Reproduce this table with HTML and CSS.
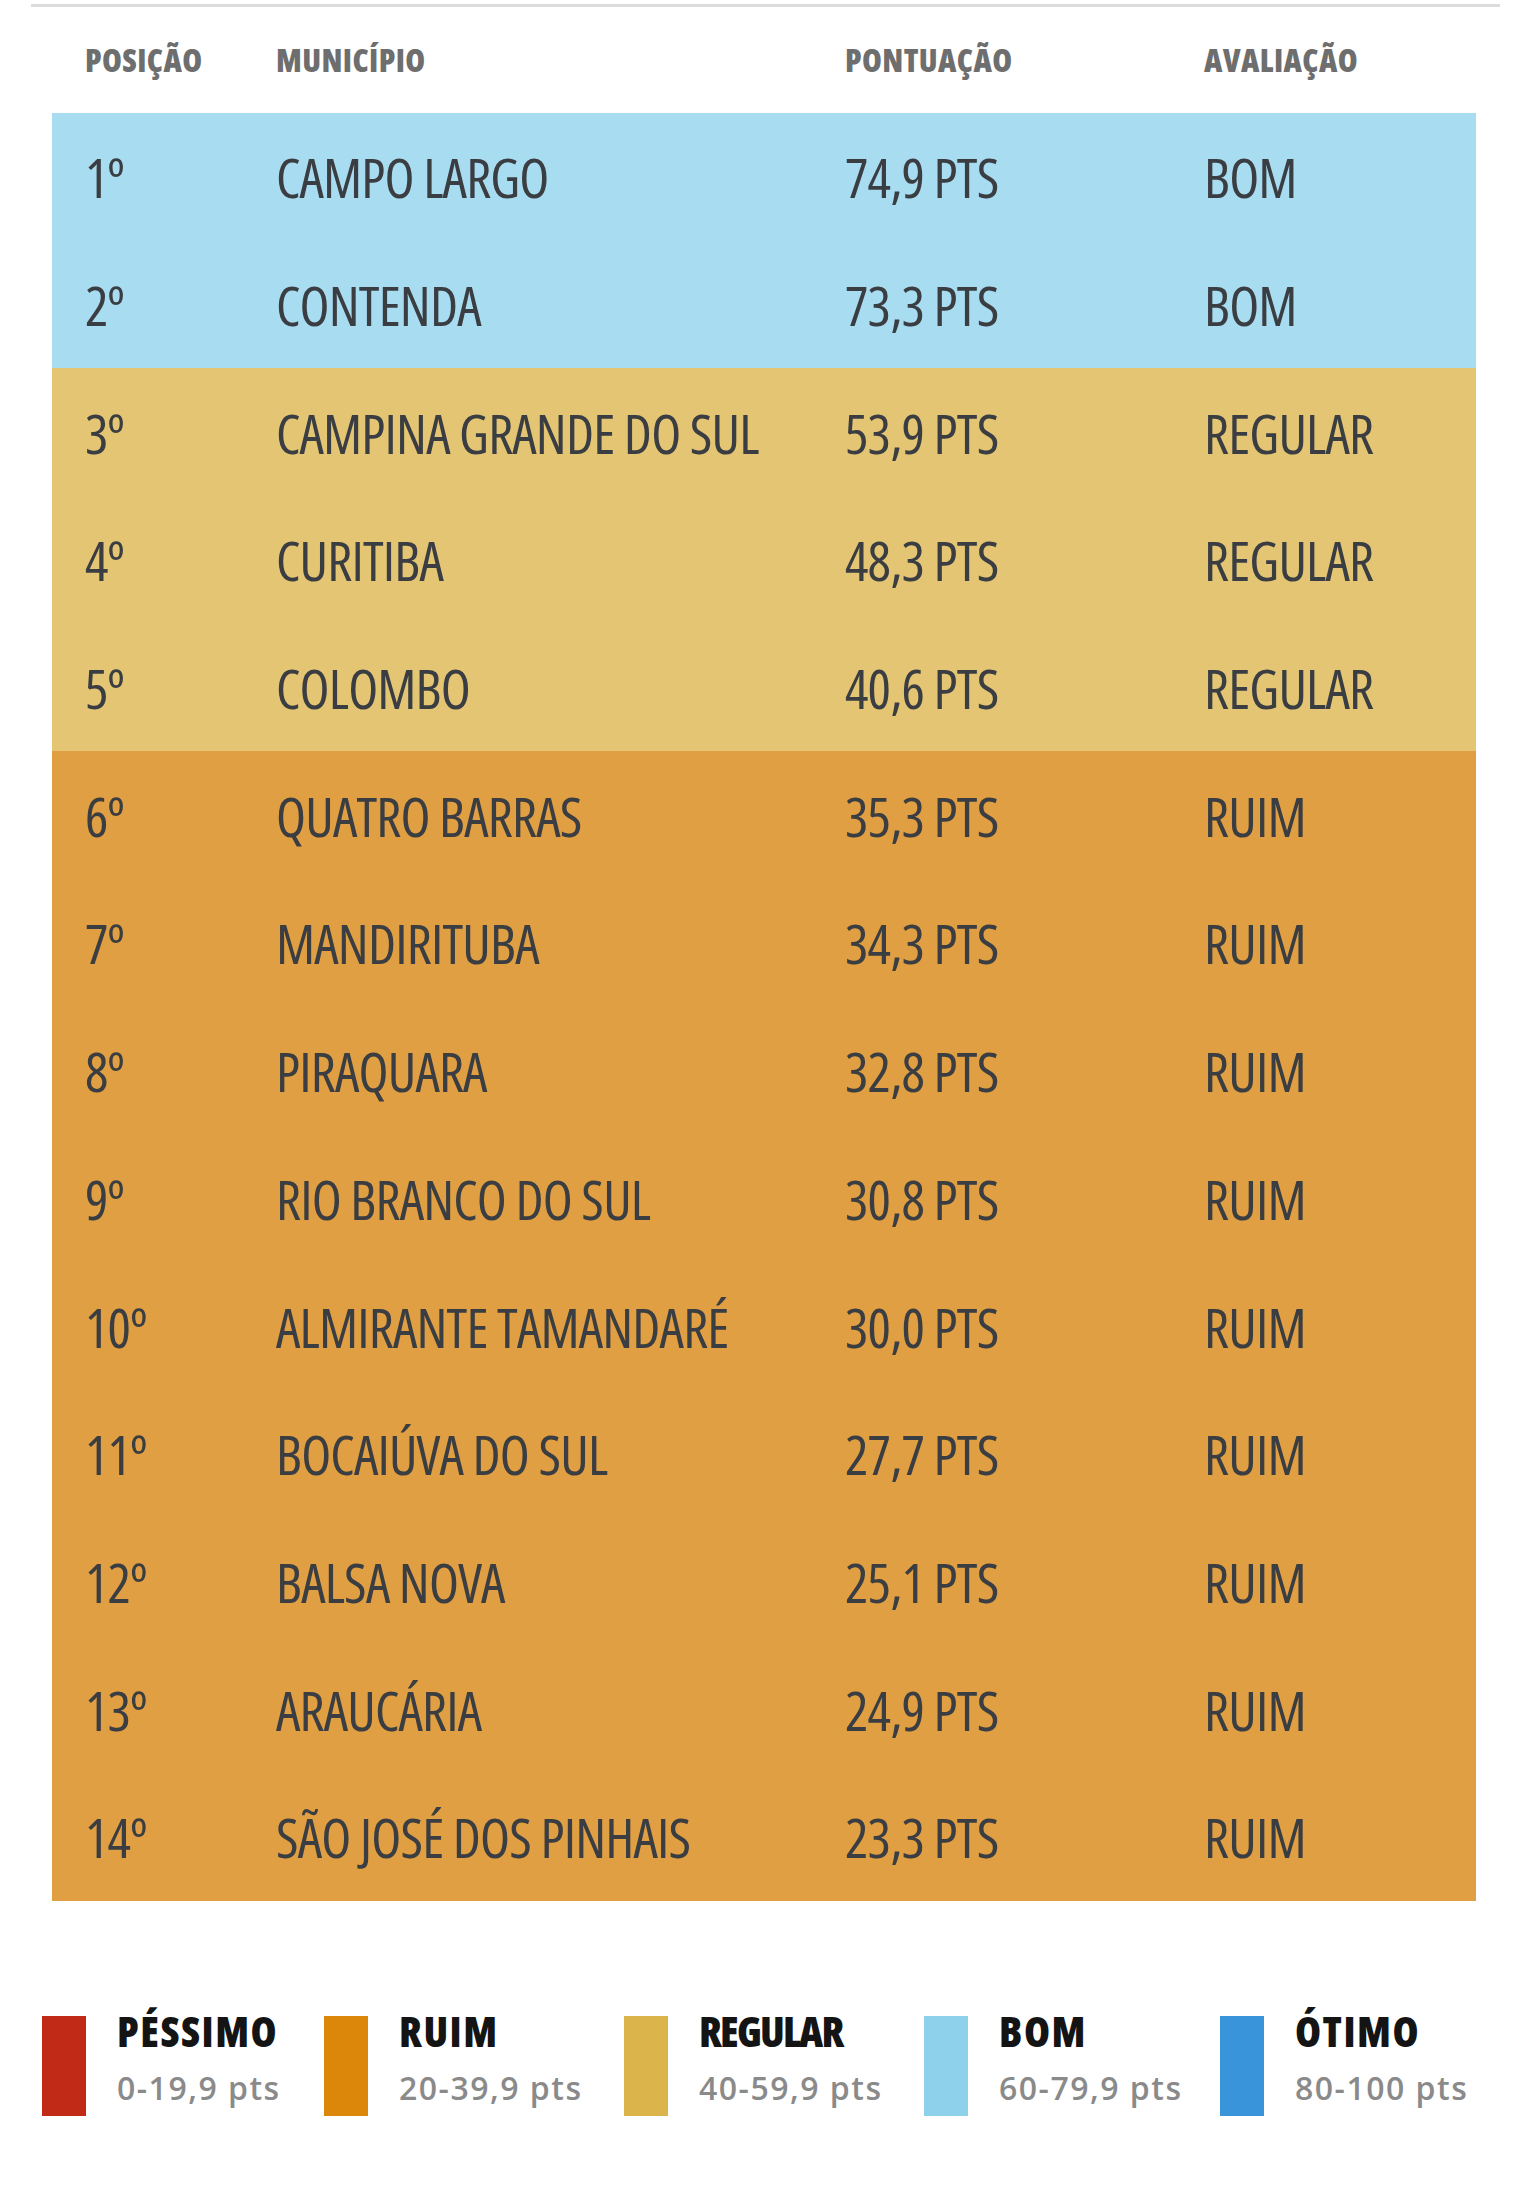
FILE: index.html
```html
<!DOCTYPE html>
<html lang="pt-BR">
<head>
<meta charset="utf-8">
<title>Ranking de municípios</title>
<link rel="stylesheet" href="styles.css">
</head>
<body>
<div class="page">
  <div class="topline"></div>
  <div class="ranking">
    <div class="row head">
      <div class="cell">POSIÇÃO</div>
      <div class="cell">MUNICÍPIO</div>
      <div class="cell">PONTUAÇÃO</div>
      <div class="cell">AVALIAÇÃO</div>
    </div>
    <div class="row bom"><div class="cell">1º</div><div class="cell">CAMPO LARGO</div><div class="cell">74,9 PTS</div><div class="cell">BOM</div></div>
    <div class="row bom"><div class="cell">2º</div><div class="cell">CONTENDA</div><div class="cell">73,3 PTS</div><div class="cell">BOM</div></div>
    <div class="row regular"><div class="cell">3º</div><div class="cell">CAMPINA GRANDE DO SUL</div><div class="cell">53,9 PTS</div><div class="cell">REGULAR</div></div>
    <div class="row regular"><div class="cell">4º</div><div class="cell">CURITIBA</div><div class="cell">48,3 PTS</div><div class="cell">REGULAR</div></div>
    <div class="row regular"><div class="cell">5º</div><div class="cell">COLOMBO</div><div class="cell">40,6 PTS</div><div class="cell">REGULAR</div></div>
    <div class="row ruim"><div class="cell">6º</div><div class="cell">QUATRO BARRAS</div><div class="cell">35,3 PTS</div><div class="cell">RUIM</div></div>
    <div class="row ruim"><div class="cell">7º</div><div class="cell">MANDIRITUBA</div><div class="cell">34,3 PTS</div><div class="cell">RUIM</div></div>
    <div class="row ruim"><div class="cell">8º</div><div class="cell">PIRAQUARA</div><div class="cell">32,8 PTS</div><div class="cell">RUIM</div></div>
    <div class="row ruim"><div class="cell">9º</div><div class="cell">RIO BRANCO DO SUL</div><div class="cell">30,8 PTS</div><div class="cell">RUIM</div></div>
    <div class="row ruim"><div class="cell">10º</div><div class="cell">ALMIRANTE TAMANDARÉ</div><div class="cell">30,0 PTS</div><div class="cell">RUIM</div></div>
    <div class="row ruim"><div class="cell">11º</div><div class="cell">BOCAIÚVA DO SUL</div><div class="cell">27,7 PTS</div><div class="cell">RUIM</div></div>
    <div class="row ruim"><div class="cell">12º</div><div class="cell">BALSA NOVA</div><div class="cell">25,1 PTS</div><div class="cell">RUIM</div></div>
    <div class="row ruim"><div class="cell">13º</div><div class="cell">ARAUCÁRIA</div><div class="cell">24,9 PTS</div><div class="cell">RUIM</div></div>
    <div class="row ruim"><div class="cell">14º</div><div class="cell">SÃO JOSÉ DOS PINHAIS</div><div class="cell">23,3 PTS</div><div class="cell">RUIM</div></div>
  </div>

  <div class="legend">
    <div class="item"><span class="swatch sw-pessimo"></span><div class="label"><div class="name">PÉSSIMO</div><div class="range">0-19,9 pts</div></div></div>
    <div class="item"><span class="swatch sw-ruim"></span><div class="label"><div class="name">RUIM</div><div class="range">20-39,9 pts</div></div></div>
    <div class="item"><span class="swatch sw-regular"></span><div class="label"><div class="name name-tight">REGULAR</div><div class="range">40-59,9 pts</div></div></div>
    <div class="item"><span class="swatch sw-bom"></span><div class="label"><div class="name">BOM</div><div class="range">60-79,9 pts</div></div></div>
    <div class="item"><span class="swatch sw-otimo"></span><div class="label"><div class="name">ÓTIMO</div><div class="range">80-100 pts</div></div></div>
  </div>
</div>
</body>
</html>
```
FILE: styles.css
```css
html, body {
  margin: 0;
  padding: 0;
  background: #ffffff;
}

.page {
  padding-top: 4px;
  font-family: "Open Sans", "Noto Sans", sans-serif;
  font-stretch: 75%;
}

.topline {
  height: 3px;
  margin: 0 20px 0 31px;
  background: #dcdcdc;
}

.ranking {
  margin-left: 52px;
  width: 1424px;
}

.row {
  display: grid;
  grid-template-columns: 191px 569px 359px 1fr;
  align-items: center;
  padding-left: 33px;
  height: 127.7px;
  font-size: 55px;
  font-weight: 500;
  line-height: 1;
  letter-spacing: -0.8px;
  color: #3a3d41;
  white-space: nowrap;
}

.row.head {
  height: 106px;
  font-size: 32px;
  font-weight: 800;
  letter-spacing: 0.4px;
  color: #6e6e6e;
  background: #ffffff;
}

.bom { background: #a8dcf1; }
.regular { background: #e4c574; }
.ruim { background: #e09f42; }

.legend {
  display: grid;
  grid-template-columns: 282px 300px 300px 296px auto;
  margin-top: 115px;
  padding-left: 42px;
}

.item {
  display: flex;
  align-items: flex-start;
  gap: 31px;
}

.swatch {
  flex: none;
  width: 44px;
  height: 100px;
}

.sw-pessimo { background: #c02a17; }
.sw-ruim { background: #dc860a; }
.sw-regular { background: #dcb44c; }
.sw-bom { background: #8ed1eb; }
.sw-otimo { background: #3a94d9; }

.name {
  font-size: 42px;
  font-weight: 800;
  line-height: 30px;
  letter-spacing: 1.5px;
  color: #141414;
}

.name-tight {
  letter-spacing: -1.8px;
}

.range {
  margin-top: 22px;
  font-size: 32px;
  font-weight: 600;
  font-stretch: 100%;
  line-height: 40px;
  letter-spacing: 1.5px;
  color: #8a8a8a;
  white-space: nowrap;
}
```
